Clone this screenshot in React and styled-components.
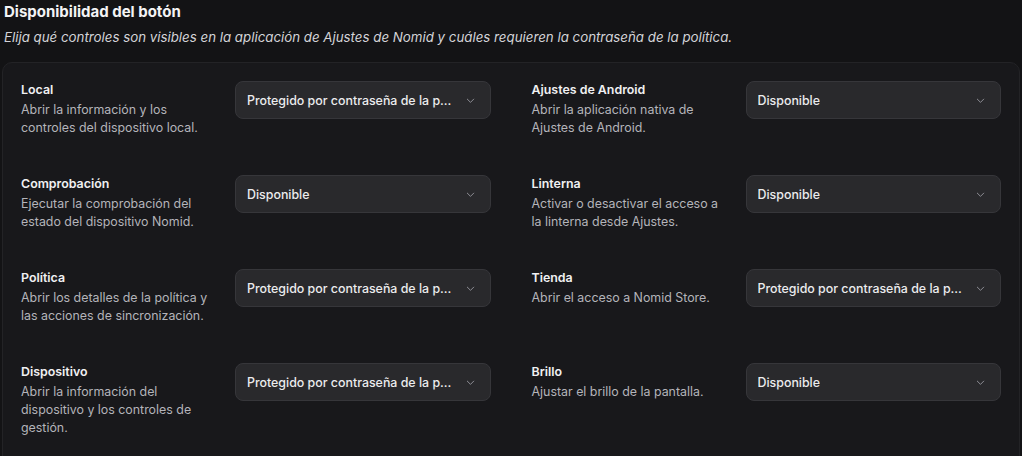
import React from "react";
import styled, { createGlobalStyle } from "styled-components";

const Global = createGlobalStyle`
  html, body {
    margin: 0;
    background: #131315;
    color: #ececee;
    font-family: Inter, "Noto Sans", sans-serif;
    -webkit-font-smoothing: antialiased;
  }
`;

const Page = styled.div`
  padding: 3px 2px 0 2px;
`;

const Title = styled.h2`
  margin: 0 0 0 2px;
  font-size: 15px;
  line-height: 18px;
  font-weight: 700;
  color: #f4f4f5;
`;

const Subtitle = styled.p`
  margin: 7px 0 0 2px;
  font-size: 13.3px;
  line-height: 18px;
  font-style: italic;
  color: #d4d4d8;
`;

const Card = styled.div`
  margin-top: 16px;
  background: #18181b;
  border: 1px solid #232326;
  border-radius: 10px;
  padding: 18px 18px 30px 18px;
  display: grid;
  grid-template-columns: 1fr 1fr;
  column-gap: 41px;
  row-gap: 38px;
`;

const Item = styled.div`
  display: grid;
  grid-template-columns: 195px 1fr;
  column-gap: 19px;
  align-items: start;
`;

const Label = styled.div`
  font-size: 12.4px;
  line-height: 18px;
  font-weight: 600;
  color: #f0f0f2;
`;

const Desc = styled.div`
  margin-top: 2px;
  font-size: 12.4px;
  line-height: 18px;
  color: #b4b4ba;
`;

const Select = styled.button`
  display: flex;
  align-items: center;
  justify-content: space-between;
  height: 38px;
  width: 100%;
  box-sizing: border-box;
  padding: 0 14px 0 11px;
  background: #29292c;
  border: 1px solid #36363a;
  border-radius: 8px;
  color: #ececee;
  font-family: inherit;
  font-size: 12.4px;
  font-weight: 500;
  text-align: left;
  cursor: pointer;
`;

const Value = styled.span`
  overflow: hidden;
  white-space: nowrap;
  text-overflow: ellipsis;
  max-width: 208px;
`;

const Chevron = () => (
  <svg width="11" height="11" viewBox="0 0 24 24" fill="none" stroke="#a1a1aa" strokeWidth="1.8" strokeLinecap="round" strokeLinejoin="round">
    <path d="M5 9l7 7 7-7" />
  </svg>
);

const PROTECTED = "Protegido por contraseña de la política";
const AVAILABLE = "Disponible";

const items = [
  { label: "Local", desc: "Abrir la información y los controles del dispositivo local.", value: PROTECTED },
  { label: "Ajustes de Android", desc: "Abrir la aplicación nativa de Ajustes de Android.", value: AVAILABLE },
  { label: "Comprobación", desc: "Ejecutar la comprobación del estado del dispositivo Nomid.", value: AVAILABLE },
  { label: "Linterna", desc: "Activar o desactivar el acceso a la linterna desde Ajustes.", value: AVAILABLE },
  { label: "Política", desc: "Abrir los detalles de la política y las acciones de sincronización.", value: PROTECTED },
  { label: "Tienda", desc: "Abrir el acceso a Nomid Store.", value: PROTECTED },
  { label: "Dispositivo", desc: "Abrir la información del dispositivo y los controles de gestión.", value: PROTECTED },
  { label: "Brillo", desc: "Ajustar el brillo de la pantalla.", value: AVAILABLE },
];

export default function App() {
  return (
    <Page>
      <Global />
      <Title>Disponibilidad del botón</Title>
      <Subtitle>
        Elija qué controles son visibles en la aplicación de Ajustes de Nomid y cuáles requieren la contraseña de la política.
      </Subtitle>
      <Card>
        {items.map((it) => (
          <Item key={it.label}>
            <div>
              <Label>{it.label}</Label>
              <Desc>{it.desc}</Desc>
            </div>
            <Select>
              <Value>{it.value}</Value>
              <Chevron />
            </Select>
          </Item>
        ))}
      </Card>
    </Page>
  );
}
